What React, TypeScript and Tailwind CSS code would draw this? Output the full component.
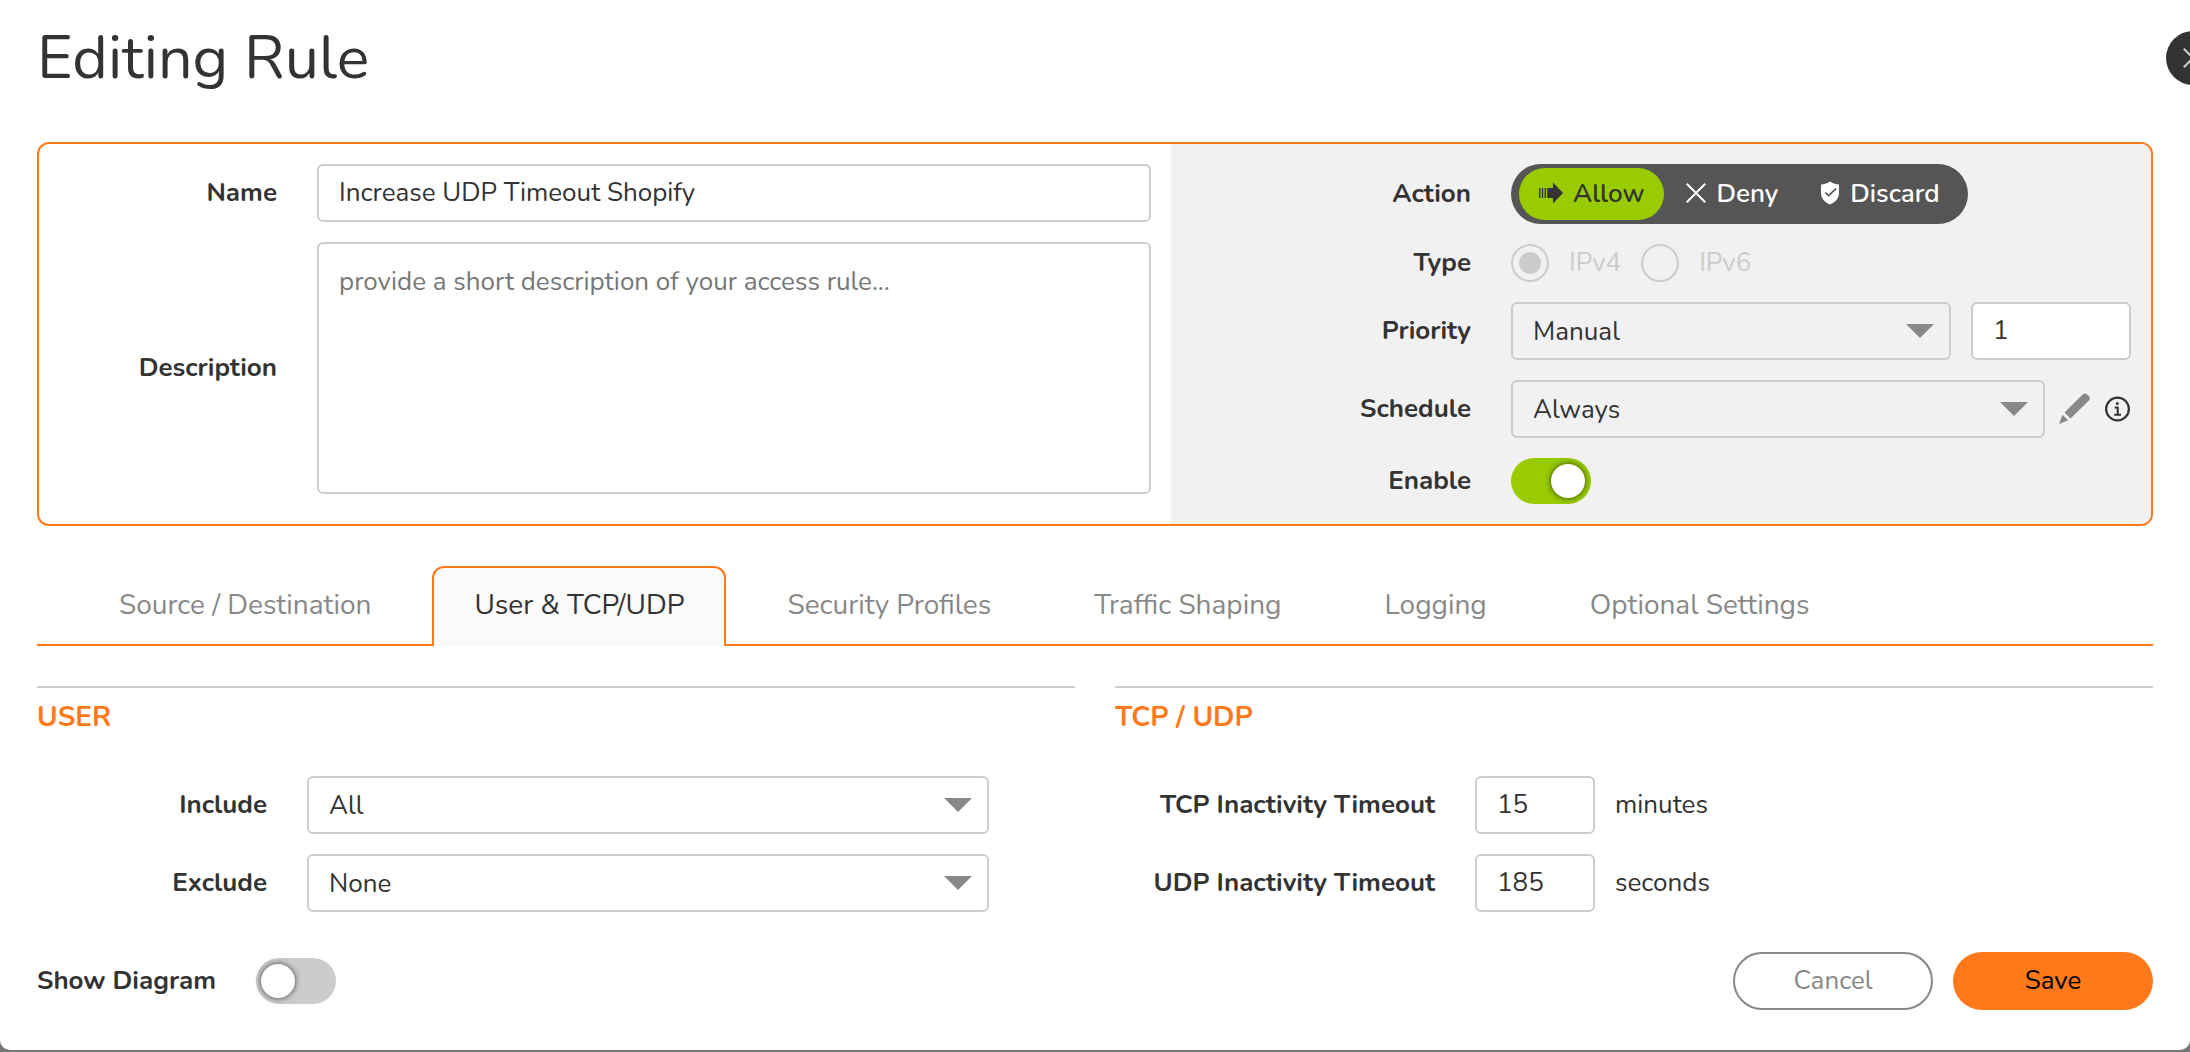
import React, { ReactNode, useState } from "react";

function AllowIcon() {
  return (
    <svg width="24" height="22" viewBox="0 0 24 22" fill="currentColor" aria-hidden="true">
      <path d="M0 6h1.4v10H0zM2.800 6h1.400v10H2.800zM5.600 6h1.400v10H5.600zM8.200 6H14V.5L24 11 14 21.500V16H8.200z" />
    </svg>
  );
}

function DenyIcon() {
  return (
    <svg width="20" height="20" viewBox="0 0 20 20" fill="none" stroke="currentColor" strokeWidth="2" aria-hidden="true">
      <path d="M.8.8l18.4 18.4M19.2.8L.8 19.2" />
    </svg>
  );
}

function DiscardIcon() {
  return (
    <svg width="20" height="24" viewBox="0 0 20 24" aria-hidden="true">
      <path d="M10 .5c2.500 1.800 5.500 2.700 9 3V12c0 5.200-3.400 9-9 11.500C4.400 21 1 17.200 1 12V3.500c3.500-.3 6.500-1.200 9-3z" fill="currentColor" />
      <path d="M5.200 11.500l3.400 3.200L16 7.600" fill="none" stroke="#555" strokeWidth="1.600" />
    </svg>
  );
}

function PencilIcon() {
  return (
    <svg width="32" height="32" viewBox="0 0 32 32" fill="#888" aria-hidden="true">
      <path d="M5.500 19.500L23.500 1.800c1.700-1.600 3.400-1.600 4.900-.1l1.400 1.400c1.500 1.500 1.500 3.100-.1 4.700L11.500 25.500z" />
      <path d="M3.500 21.700l5.600 5.600L0 31z" />
    </svg>
  );
}

function InfoIcon() {
  return (
    <svg width="26" height="26" viewBox="0 0 26 26" fill="none" stroke="#333" strokeWidth="2" aria-hidden="true">
      <circle cx="12.500" cy="13" r="11.400" strokeWidth="2.200" />
      <circle cx="12.300" cy="7.600" r="1.500" fill="#333" stroke="none" />
      <path d="M9.700 11.500h3v7.300M9.200 18.800h6.800" />
    </svg>
  );
}

function Select({ id, options, label }: { id: string; options: string[]; label?: string }) {
  return (
    <div className="relative min-w-0 flex-1">
      <select
        id={id}
        aria-label={label}
        className="block h-[58px] w-full appearance-none rounded-md border-2 border-[#ccc] bg-transparent pl-5 pr-16 text-[26px]"
      >
        {options.map((o) => (
          <option key={o}>{o}</option>
        ))}
      </select>
      <svg
        className="pointer-events-none absolute right-[17px] top-1/2 -translate-y-1/2"
        width="28"
        height="14"
        viewBox="0 0 28 14"
        fill="#888"
        aria-hidden="true"
      >
        <path d="M0 0h28L14 14z" />
      </svg>
    </div>
  );
}

function TextInput({ id, value, className, label }: { id: string; value: string; className: string; label?: string }) {
  return (
    <input
      id={id}
      aria-label={label}
      defaultValue={value}
      className={"block h-[58px] rounded-md border-2 border-[#ccc] bg-white px-5 pb-0.5 text-[26px] " + className}
    />
  );
}

function Toggle({ id, on }: { id: string; on?: boolean }) {
  return (
    <input
      id={id}
      type="checkbox"
      role="switch"
      defaultChecked={on}
      className="block h-[46px] w-20 shrink-0 appearance-none rounded-full bg-[#ccc] before:ml-[5px] before:mt-1.5 before:block before:size-[34px] before:rounded-full before:bg-white before:shadow-[0_0_6px_rgba(0,0,0,0.7)] before:content-[''] checked:bg-[#9c0] checked:before:ml-10"
    />
  );
}

function Label({ htmlFor, children }: { htmlFor: string; children: ReactNode }) {
  return (
    <label htmlFor={htmlFor} className="self-center pb-0.5 text-right font-bold">
      {children}
    </label>
  );
}

function GroupLabel({ id, children }: { id: string; children: ReactNode }) {
  return (
    <span id={id} className="self-center text-right leading-[38px] font-bold">
      {children}
    </span>
  );
}

function Section({ title, children }: { title: string; children: ReactNode }) {
  return (
    <section className="border-t-2 border-[#ccc]">
      <h2 className="mb-[38px] pt-2 text-[28px] leading-[42px] font-bold text-[#ff791a]">{title}</h2>
      {children}
    </section>
  );
}

const actions = [
  { name: "Allow", icon: <AllowIcon /> },
  { name: "Deny", icon: <DenyIcon /> },
  { name: "Discard", icon: <DiscardIcon /> },
];

const tabs = ["Source / Destination", "User & TCP/UDP", "Security Profiles", "Traffic Shaping", "Logging", "Optional Settings"];

export default function App() {
  const [action, setAction] = useState("Allow");
  const [tab, setTab] = useState("User & TCP/UDP");

  return (
    <div className="min-h-screen overflow-hidden bg-[#777] pb-0.5 font-['Nunito','Lato',sans-serif] text-[26px] leading-[39px] text-[#333]">
      <div className="relative rounded-b-[10px] bg-white px-[37px] pb-10">
        <header className="flex h-[98px] items-end pt-4">
          <h1 className="text-[61px] leading-[80px]">Editing Rule</h1>
          <button
            type="button"
            aria-label="Close"
            className="absolute -right-[30px] top-[31px] flex size-[54px] items-center justify-center rounded-full bg-[#333] text-[#ccc]"
          >
            <DenyIcon />
          </button>
        </header>

        <form className="mt-11">
          <div className="grid grid-cols-[1132fr_980fr] overflow-hidden rounded-xl border-2 border-[#ff791a]">
            <div className="grid grid-cols-[238px_minmax(0,1fr)] content-start gap-x-10 gap-y-5 py-5 pr-5">
              <Label htmlFor="name">Name</Label>
              <TextInput id="name" value="Increase UDP Timeout Shopify" className="w-full" />
              <Label htmlFor="description">Description</Label>
              <textarea
                id="description"
                placeholder="provide a short description of your access rule..."
                className="block h-[252px] w-full resize-none rounded-md border-2 border-[#ccc] px-5 py-[18px] leading-[39px] placeholder:text-[#777]"
              />
            </div>

            <div className="grid grid-cols-[300px_minmax(0,1fr)] gap-x-10 gap-y-5 bg-[#f1f1f1] py-5 pr-5">
              <GroupLabel id="action-label">Action</GroupLabel>
              <div role="group" aria-labelledby="action-label" className="flex h-[60px] items-center gap-0.5 justify-self-start rounded-full bg-[#555] px-2">
                {actions.map((a) => (
                  <button
                    key={a.name}
                    type="button"
                    aria-pressed={action === a.name}
                    onClick={() => setAction(a.name)}
                    className={
                      "flex h-[52px] items-center gap-2.5 rounded-full px-5 pb-0.5 font-semibold " +
                      (action === a.name ? "bg-[#9c0] text-[#333]" : "text-white")
                    }
                  >
                    {a.icon}
                    {a.name}
                  </button>
                ))}
              </div>

              <GroupLabel id="type-label">Type</GroupLabel>
              <div role="radiogroup" aria-labelledby="type-label" className="flex h-[38px] items-center gap-5 text-[#ccc]">
                {["IPv4", "IPv6"].map((v) => (
                  <label key={v} className="flex items-center gap-5 leading-[38px]">
                    <input
                      type="radio"
                      name="type"
                      disabled
                      defaultChecked={v === "IPv4"}
                      className="flex size-[38px] appearance-none items-center justify-center rounded-full border-2 border-[#ccc] before:size-[22px] before:rounded-full checked:before:bg-[#ccc] before:content-['']"
                    />
                    {v}
                  </label>
                ))}
              </div>

              <Label htmlFor="priority">Priority</Label>
              <div className="flex gap-5">
                <Select id="priority" options={["Manual"]} />
                <TextInput id="priority-value" label="Priority value" value="1" className="w-40" />
              </div>

              <Label htmlFor="schedule">Schedule</Label>
              <div className="flex items-center">
                <Select id="schedule" options={["Always"]} />
                <button type="button" aria-label="Edit schedule" className="ml-3.5">
                  <PencilIcon />
                </button>
                <button type="button" aria-label="Schedule information" className="ml-3.5">
                  <InfoIcon />
                </button>
              </div>

              <Label htmlFor="enable">Enable</Label>
              <Toggle id="enable" on />
            </div>
          </div>

          <div role="tablist" className="mt-10 flex h-20 gap-[19px] border-b-2 border-[#ff791a] pl-10">
            {tabs.map((t) => (
              <button
                key={t}
                type="button"
                role="tab"
                aria-selected={t === tab}
                onClick={() => setTab(t)}
                className={
                  "-mb-0.5 h-20 rounded-t-xl border-2 border-b-0 px-10 pb-1 text-[28px] whitespace-nowrap " +
                  (t === tab ? "border-[#ff791a] bg-[#fafafa]" : "border-transparent text-[#888]")
                }
              >
                {t}
              </button>
            ))}
          </div>

          <div className="mt-10 grid grid-cols-2 gap-x-10">
            <Section title="USER">
              <div className="grid grid-cols-[230px_minmax(0,1fr)] gap-x-10 gap-y-5 pr-[86px]">
                <Label htmlFor="include">Include</Label>
                <Select id="include" options={["All"]} />
                <Label htmlFor="exclude">Exclude</Label>
                <Select id="exclude" options={["None"]} />
              </div>
            </Section>
            <Section title="TCP / UDP">
              <div className="grid grid-cols-[320px_minmax(0,1fr)] gap-x-10 gap-y-5">
                <Label htmlFor="tcp-timeout">TCP Inactivity Timeout</Label>
                <div className="flex items-center gap-5">
                  <TextInput id="tcp-timeout" value="15" className="w-[120px]" />
                  <span className="pb-0.5">minutes</span>
                </div>
                <Label htmlFor="udp-timeout">UDP Inactivity Timeout</Label>
                <div className="flex items-center gap-5">
                  <TextInput id="udp-timeout" value="185" className="w-[120px]" />
                  <span className="pb-0.5">seconds</span>
                </div>
              </div>
            </Section>
          </div>

          <footer className="mt-10 flex h-[58px] items-center gap-5">
            <Label htmlFor="show-diagram">Show Diagram</Label>
            <div className="ml-5 flex-1">
              <Toggle id="show-diagram" />
            </div>
            <button type="button" className="h-[58px] w-[200px] rounded-full border-2 border-[#888] pb-0.5 text-[#888]">
              Cancel
            </button>
            <button type="button" className="h-[58px] w-[200px] rounded-full bg-[#ff791a] pb-0.5 text-black">
              Save
            </button>
          </footer>
        </form>
      </div>
    </div>
  );
}
